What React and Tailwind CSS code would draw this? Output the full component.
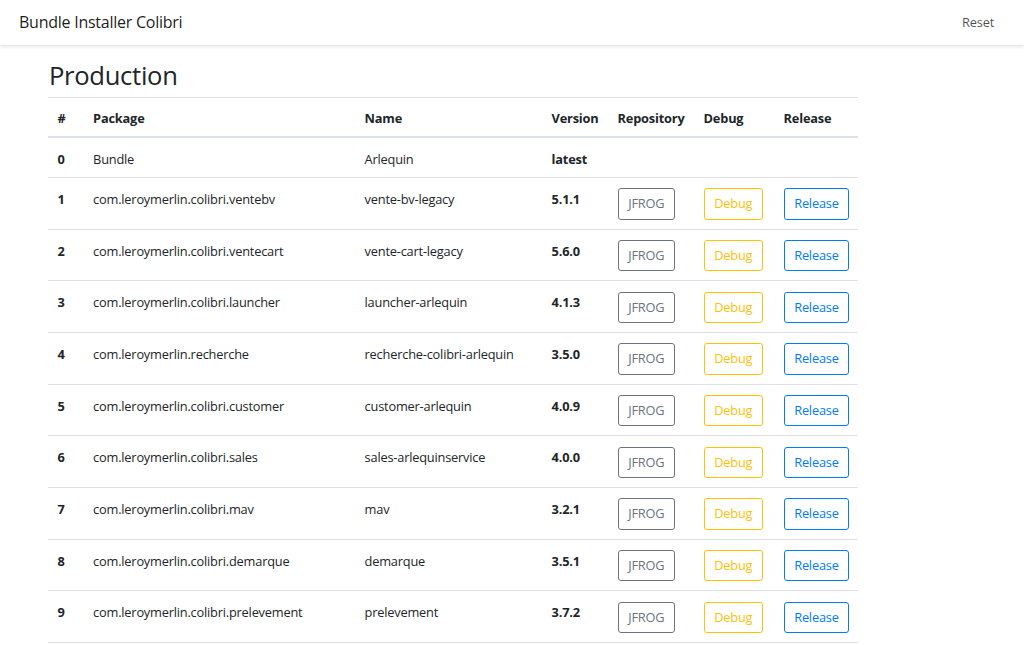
import React from 'react';

const rows = [
  ['1', 'com.leroymerlin.colibri.ventebv', 'vente-bv-legacy', '5.1.1'],
  ['2', 'com.leroymerlin.colibri.ventecart', 'vente-cart-legacy', '5.6.0'],
  ['3', 'com.leroymerlin.colibri.launcher', 'launcher-arlequin', '4.1.3'],
  ['4', 'com.leroymerlin.recherche', 'recherche-colibri-arlequin', '3.5.0'],
  ['5', 'com.leroymerlin.colibri.customer', 'customer-arlequin', '4.0.9'],
  ['6', 'com.leroymerlin.colibri.sales', 'sales-arlequinservice', '4.0.0'],
  ['7', 'com.leroymerlin.colibri.mav', 'mav', '3.2.1'],
  ['8', 'com.leroymerlin.colibri.demarque', 'demarque', '3.5.1'],
  ['9', 'com.leroymerlin.colibri.prelevement', 'prelevement', '3.7.2'],
];

const App = () => {
  const head = "px-[9.6px] pt-[10.6px] pb-[8.6px] align-top text-left font-bold";
  const text = "px-[9.6px] pt-[12px] pb-[7.2px] align-top text-left";
  const btnCell = "px-[9.6px] pt-[10.4px] pb-[8.9px] align-top text-left";
  const btn = "h-[31.4px] px-[9.6px] rounded-[3px] border bg-white text-[12.8px] leading-[19.2px] tracking-[-0.2px]";

  return (
    <div className="min-h-[645px] bg-white text-[#212529] text-[12.8px] leading-[19.2px] tracking-[-0.2px]" style={{ fontFamily: '"Open Sans", "Noto Sans", sans-serif' }}>
      <nav className="h-[45px] flex items-center justify-between pl-[19px] pr-[30px] pt-[1px] bg-white shadow-[0_1px_4px_rgba(0,0,0,0.15)]">
        <span className="text-[16px] tracking-[-0.25px] text-[rgba(0,0,0,0.9)]">Bundle Installer Colibri</span>
        <span className="text-[12.8px] text-[rgba(0,0,0,0.7)]">Reset</span>
      </nav>

      <div className="ml-[48px] w-[810px] pt-[16px]">
        <h2 className="text-[25.6px] leading-[30.7px] mb-[5.4px] font-normal tracking-[-0.3px] pl-[1px]">Production</h2>
        <table className="w-full table-fixed border-collapse">
          <thead>
            <tr className="border-t border-[#dee2e6] border-b-2">
              <th className={`${head} w-[35.5px]`}>#</th>
              <th className={`${head} w-[271.5px]`}>Package</th>
              <th className={`${head} w-[187px]`}>Name</th>
              <th className={`${head} w-[66px]`}>Version</th>
              <th className={`${head} w-[86px]`}>Repository</th>
              <th className={`${head} w-[80px]`}>Debug</th>
              <th className={`${head} w-[84px]`}>Release</th>
            </tr>
          </thead>
          <tbody>
            <tr className="border-b border-[#dee2e6]">
              <th className={`${text} font-bold`}>0</th>
              <td className={text}>Bundle</td>
              <td className={text}>Arlequin</td>
              <td className={`${text} font-bold`}>latest</td>
              <td className={text}></td>
              <td className={text}></td>
              <td className={text}></td>
            </tr>
            {rows.map(([n, pkg, name, ver]) => (
              <tr key={n} className="border-b border-[#dee2e6]">
                <th className={`${text} font-bold`}>{n}</th>
                <td className={text}>{pkg}</td>
                <td className={text}>{name}</td>
                <td className={`${text} font-bold`}>{ver}</td>
                <td className={btnCell}>
                  <button className={`${btn} border-[#6c757d] text-[#6c757d]`}>JFROG</button>
                </td>
                <td className={btnCell}>
                  <button className={`${btn} border-[#ffc107] text-[#ffc107]`}>Debug</button>
                </td>
                <td className={btnCell}>
                  <button className={`${btn} border-[#007bff] text-[#007bff]`}>Release</button>
                </td>
              </tr>
            ))}
          </tbody>
        </table>
      </div>
    </div>
  );
};

export default App;
